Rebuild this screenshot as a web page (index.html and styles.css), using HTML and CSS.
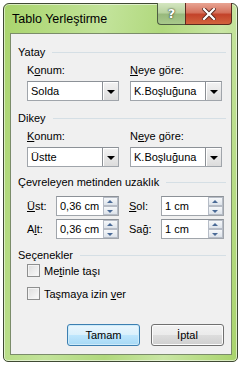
FILE: index.html
```html
<!DOCTYPE html>
<html lang="tr">
<head>
    <meta charset="UTF-8">
    <title>Tablo Yerleştirme</title>
    <link rel="stylesheet" href="styles.css">
</head>
<body>
    <div class="window">
        <div class="titlebar">
            <div class="title">Tablo Yerleştirme</div>
            <div class="caption-buttons">
                <div class="cap-btn help">?</div>
                <div class="cap-btn close">
                    <svg width="14" height="12" viewBox="0 0 14 12">
                        <path d="M2 1 L12 11 M12 1 L2 11" stroke="#5a2a20" stroke-width="4" stroke-linecap="square"/>
                        <path d="M2 1 L12 11 M12 1 L2 11" stroke="#fff" stroke-width="2.2" stroke-linecap="square"/>
                    </svg>
                </div>
            </div>
        </div>

        <div class="client">
            <!-- Yatay -->
            <div class="group-title"><span>Yatay</span><i></i></div>
            <div class="pair labels">
                <div class="col">K<u>o</u>num:</div>
                <div class="col"><u>N</u>eye göre:</div>
            </div>
            <div class="pair combos">
                <div class="combo"><span>Solda</span><b class="drop"></b></div>
                <div class="combo"><span>K.Boşluğuna</span><b class="drop"></b></div>
            </div>

            <!-- Dikey -->
            <div class="group-title gap-top"><span>Dikey</span><i></i></div>
            <div class="pair labels">
                <div class="col"><u>K</u>onum:</div>
                <div class="col">N<u>e</u>ye göre:</div>
            </div>
            <div class="pair combos">
                <div class="combo"><span>Üstte</span><b class="drop"></b></div>
                <div class="combo"><span>K.Boşluğuna</span><b class="drop"></b></div>
            </div>

            <!-- Cevreleyen metin -->
            <div class="group-title gap-top2"><span>Çevreleyen metinden uzaklık</span><i></i></div>
            <div class="spin-row first">
                <label class="spin-label"><u>Ü</u>st:</label>
                <div class="spin"><span>0,36 cm</span><b class="arrows"><em class="up"></em><em class="down"></em></b></div>
                <label class="spin-label right"><u>S</u>ol:</label>
                <div class="spin"><span>1 cm</span><b class="arrows"><em class="up"></em><em class="down"></em></b></div>
            </div>
            <div class="spin-row">
                <label class="spin-label">A<u>l</u>t:</label>
                <div class="spin"><span>0,36 cm</span><b class="arrows"><em class="up"></em><em class="down"></em></b></div>
                <label class="spin-label right">Sa<u>ğ</u>:</label>
                <div class="spin"><span>1 cm</span><b class="arrows"><em class="up"></em><em class="down"></em></b></div>
            </div>

            <!-- Secenekler -->
            <div class="group-title gap-top3"><span>Seçenekler</span><i></i></div>
            <div class="check first"><b class="box"></b><span>Me<u>t</u>inle taşı</span></div>
            <div class="check"><b class="box"></b><span>Taşmaya izin <u>v</u>er</span></div>

            <div class="buttons">
                <div class="btn default">Tamam</div>
                <div class="btn">İptal</div>
            </div>
        </div>
    </div>
</body>
</html>
```

FILE: styles.css
```css
body {
    margin: 0;
    background: #fff;
    font-family: "Liberation Sans", Arial, sans-serif;
    font-size: 11px;
    color: #000;
}
u {
    text-decoration: underline;
    text-underline-offset: 1px;
}
.window {
    margin: 3px 0 0 3px;
    width: 235px;
    height: 359px;
    box-sizing: border-box;
    border: 1px solid #3f4a33;
    border-radius: 6px 6px 5px 5px;
    background: linear-gradient(100deg, #a9d46c 0%, #c2e39a 35%, #b0d87c 55%, #c9e6a4 75%, #a8d36b 100%);
    box-shadow: inset 0 0 0 1px rgba(255, 255, 255, 0.55);
    display: flex;
    flex-direction: column;
}
.titlebar {
    height: 29px;
    display: flex;
    justify-content: space-between;
    align-items: flex-start;
}
.title {
    font-size: 12.5px;
    padding: 8px 0 0 8px;
    color: #000;
}
.caption-buttons {
    display: flex;
    margin-right: 5px;
    margin-top: -1px;
}
.cap-btn {
    height: 21px;
    border: 1px solid #4e5d42;
    border-top: none;
    display: flex;
    align-items: center;
    justify-content: center;
}
.help {
    width: 27px;
    border-radius: 0 0 0 4px;
    background: linear-gradient(#d4e6c0 0%, #b9d3a1 45%, #98b97c 55%, #a9c98c 100%);
    color: #fff;
    font-family: "DejaVu Sans", sans-serif;
    font-weight: bold;
    font-size: 13px;
    text-shadow: 0 0 2px #2c3a24, 0 0 1px #2c3a24;
    border-right: none;
}
.close {
    width: 45px;
    border-radius: 0 0 4px 0;
    background: linear-gradient(#e8a493 0%, #d5735e 45%, #c3432a 55%, #d2643e 100%);
    border-color: #5b2a1f;
}
.client {
    flex: 1;
    margin: 0 5px 6px 6px;
    background: #f0f0f0;
    border: 1px solid #7b8c6a;
    padding: 10px 0 0 0;
}
.group-title {
    display: flex;
    align-items: center;
    height: 15px;
    padding-left: 7px;
    margin-right: 5px;
}
.group-title i {
    flex: 1;
    height: 1px;
    background: #d5dfe5;
    margin-left: 7px;
    margin-top: 1px;
}
.gap-top {
    margin-top: 9px;
}
.gap-top2 {
    margin-top: 7px;
}
.gap-top3 {
    margin-top: 8px;
}
.pair {
    display: flex;
    gap: 11px;
    padding-left: 16px;
}
.labels {
    margin-top: 4px;
    height: 15px;
    line-height: 15px;
}
.labels .col {
    width: 92px;
}
.combos {
    margin-top: 3px;
}
.combo {
    width: 92px;
    height: 20px;
    box-sizing: border-box;
    border: 1px solid #a0a5ab;
    border-top-color: #8c9197;
    background: #fff;
    display: flex;
    align-items: center;
    justify-content: space-between;
    padding-left: 3px;
}
.drop {
    width: 16px;
    height: 18px;
    box-sizing: border-box;
    border-left: 1px solid #8b8f94;
    background: linear-gradient(#f3f3f3, #dcdcdc);
    position: relative;
    box-shadow: inset 1px 1px 0 #fff;
}
.drop::after {
    content: "";
    position: absolute;
    left: 4px;
    top: 8px;
    border-left: 4px solid transparent;
    border-right: 4px solid transparent;
    border-top: 4px solid #000;
}
.spin-row {
    display: flex;
    align-items: center;
    padding-left: 16px;
    margin-top: 3px;
}
.spin-row.first {
    margin-top: 7px;
}
.spin-label {
    width: 29px;
    line-height: 15px;
}
.spin-label.right {
    margin-left: 10px;
    width: 32px;
}
.spin {
    width: 63px;
    height: 20px;
    box-sizing: border-box;
    border: 1px solid #a0a5ab;
    border-top-color: #8c9197;
    background: #fff;
    display: flex;
    align-items: center;
    justify-content: space-between;
    padding-left: 3px;
}
.arrows {
    width: 15px;
    height: 18px;
    display: flex;
    flex-direction: column;
}
.arrows em {
    flex: 1;
    box-sizing: border-box;
    border: 1px solid #b6bcc6;
    background: linear-gradient(#f6f8fa, #dde3ea);
    position: relative;
}
.arrows em::after {
    content: "";
    position: absolute;
    left: 3px;
    border-left: 3.5px solid transparent;
    border-right: 3.5px solid transparent;
}
.arrows .up::after {
    top: 2px;
    border-bottom: 3px solid #4a6a96;
}
.arrows .down::after {
    top: 3px;
    border-top: 3px solid #4a6a96;
}
.check {
    display: flex;
    align-items: center;
    height: 15px;
    padding-left: 16px;
    margin-top: 8px;
}
.check.first {
    margin-top: 1px;
}
.box {
    width: 13px;
    height: 13px;
    box-sizing: border-box;
    border: 1px solid #8e8f8f;
    background: linear-gradient(135deg, #dcdcdc, #fbfbfb);
    box-shadow: inset 0 0 0 1px #f4f4f4;
    margin-right: 4px;
}
.buttons {
    display: flex;
    gap: 11px;
    padding-left: 56px;
    margin-top: 23px;
}
.btn {
    width: 73px;
    height: 22px;
    box-sizing: border-box;
    border: 1px solid #707070;
    border-radius: 3px;
    background: linear-gradient(#f2f2f2 0%, #ebebeb 50%, #dddddd 51%, #cfcfcf 100%);
    box-shadow: inset 0 0 0 1px #fcfcfc;
    display: flex;
    align-items: center;
    justify-content: center;
}
.btn.default {
    border-color: #3c7fb1;
    background: linear-gradient(#eaf6fd 0%, #d9f0fc 50%, #bee6fd 51%, #a7d9f5 100%);
    box-shadow: inset 0 0 0 1px #cdebfa;
}
```
